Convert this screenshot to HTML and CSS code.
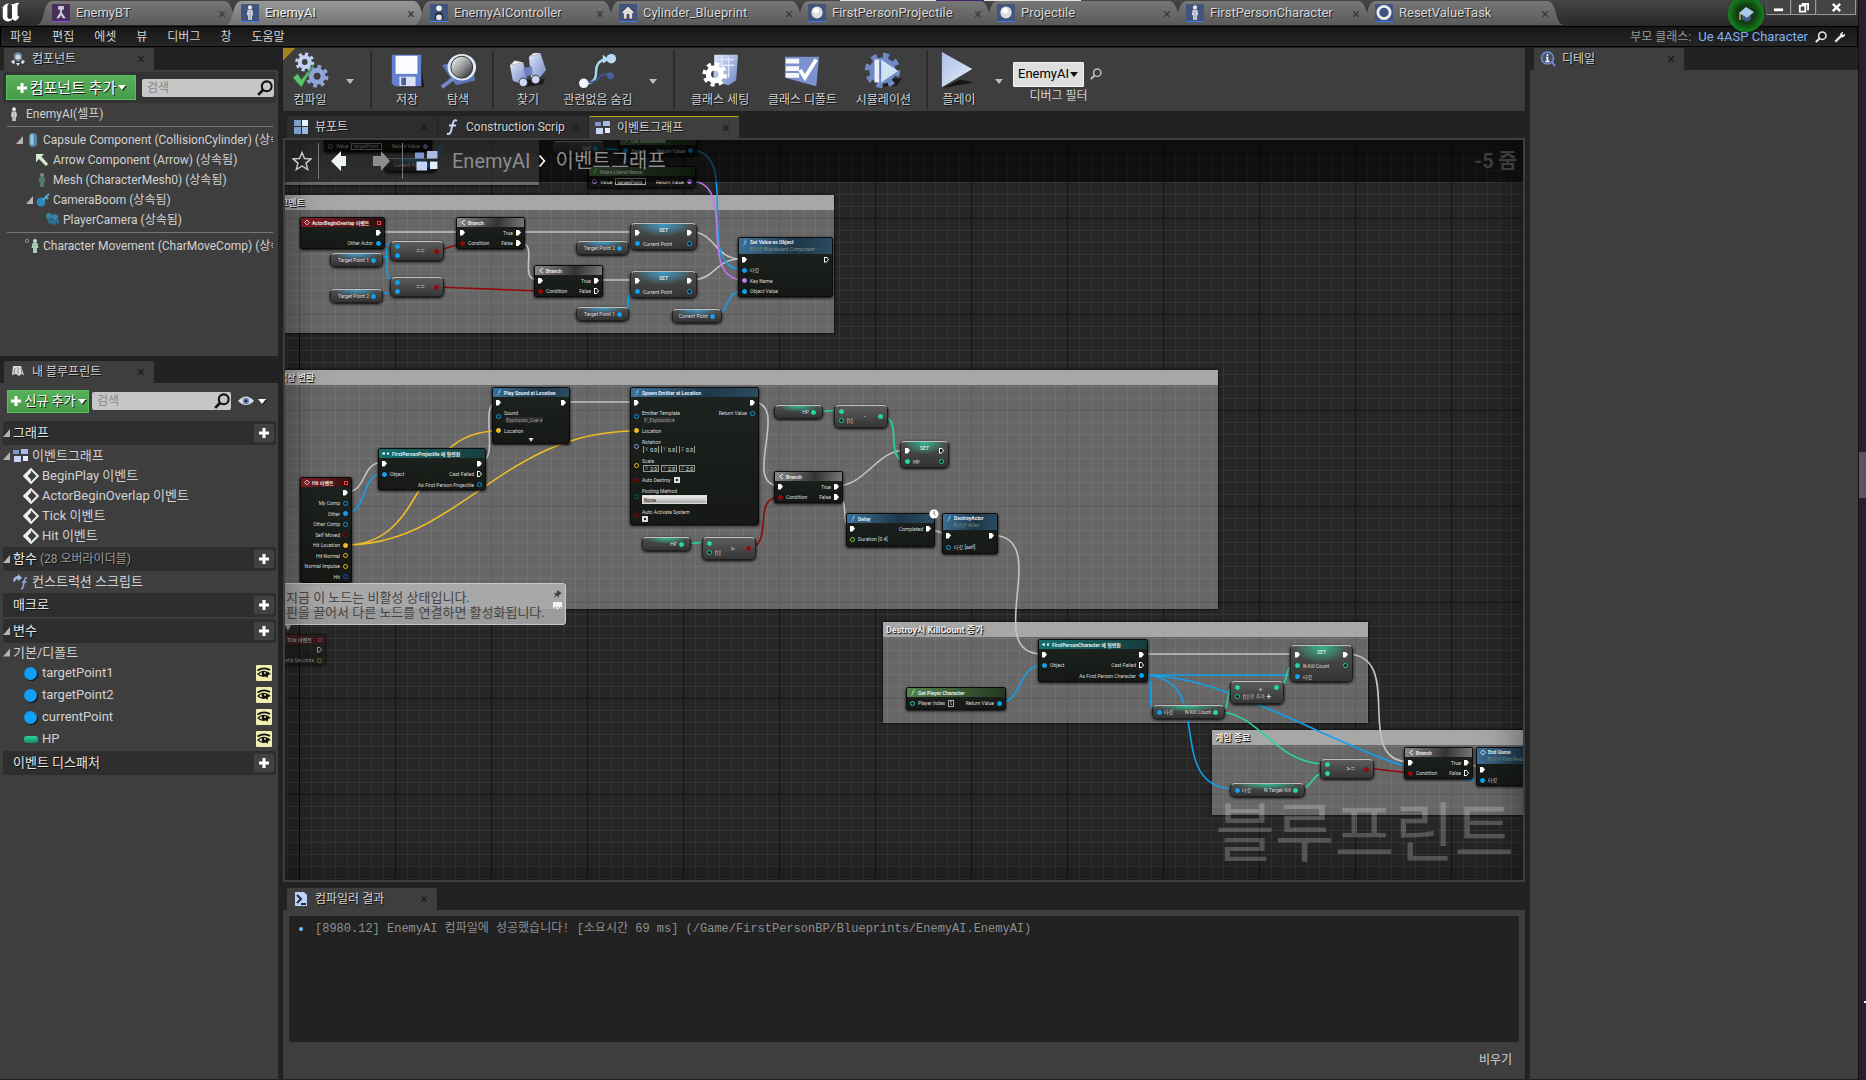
FILE: index.html
```html
<!DOCTYPE html>
<html lang="ko">
<head>
<meta charset="utf-8">
<title>EnemyAI</title>
<link rel="stylesheet" href="styles.css">
</head>
<body>
<svg class="defs" aria-hidden="true">
  <defs>
    <linearGradient id="steel" x1="0" y1="0" x2="1" y2="1"><stop offset="0" stop-color="#dfe7fb"/><stop offset="1" stop-color="#6f86c4"/></linearGradient>
    <linearGradient id="lens" x1="0" y1="0" x2="1" y2="1"><stop offset="0" stop-color="#fff"/><stop offset=".5" stop-color="#999"/><stop offset="1" stop-color="#222"/></linearGradient>
    <linearGradient id="play" x1="0" y1="0" x2="1" y2="1"><stop offset="0" stop-color="#aebde8"/><stop offset="1" stop-color="#e2f0f8"/></linearGradient>
    <symbol id="gear" viewBox="-12 -12 24 24"><circle r="6" fill="none" stroke="currentColor" stroke-width="5"/><circle r="9.5" fill="none" stroke="currentColor" stroke-width="4" stroke-dasharray="3.73 3.73"/></symbol>
    <symbol id="search" viewBox="0 0 14 14"><circle cx="8.5" cy="5.5" r="4.3" fill="none" stroke="currentColor" stroke-width="1.8"/><path d="M5.5 8.5 1 13" stroke="currentColor" stroke-width="2.4"/></symbol>
    <symbol id="person" viewBox="0 0 18 18"><circle cx="9" cy="3.6" r="2.2" fill="#e8e8e8"/><path d="M6.5 6.2h5l1 5.6h-1.4V17H7v-5.2H5.6z" fill="#cfd3d8"/><path d="M9 7v10" stroke="#777" stroke-width=".6"/></symbol>
    <symbol id="egg" viewBox="0 0 18 18"><ellipse cx="9" cy="9" rx="6" ry="6.4" fill="#ddd"/><ellipse cx="8" cy="7" rx="3" ry="3" fill="#fff"/></symbol>
    <symbol id="graph" viewBox="0 0 16 14"><path d="M0 1h6v4H0z" fill="#7f97cf"/><path d="M8 0h7v5H8z" fill="#aabbe8"/><path d="M1 7h7v6H1z" fill="#c6d2f3"/><path d="M10 7h5v5h-5z" fill="#e6ecff"/></symbol>
    <symbol id="event" viewBox="0 0 14 14"><path d="M7 1 13 7 7 13 1 7z" fill="none" stroke="#eee" stroke-width="1.8"/><path d="M7 1v12L1 7z" fill="#eee"/><path d="M4 7l3-3v6z" fill="#3e3e3e"/></symbol>
    <symbol id="branch" viewBox="0 0 6 6"><path d="M5 .5 1.5 3 5 5.5" fill="none" stroke="#eee" stroke-width="1"/></symbol>
    <symbol id="dia" viewBox="0 0 6 6"><path d="M3 .6 5.4 3 3 5.4 .6 3z" fill="none" stroke="#eee" stroke-width=".9"/></symbol>
    <symbol id="cast" viewBox="0 0 8 6"><path d="M0 3h3M5 3h2M2 1.6v2.8M6 1.6v2.8" stroke="#eee" stroke-width="1.2"/></symbol>
    <symbol id="fn" viewBox="0 0 6 8"><path d="M5.4 1C4 .4 3.6 1.4 3.2 3.4 2.8 5.8 2.2 7.4.8 6.9M2 3.4h2.6" fill="none" stroke="currentColor" stroke-width="1"/></symbol>
    <symbol id="eye" viewBox="0 0 16 16"><path d="M1.500 5.500Q8 1.500 14 5" stroke="#111" stroke-width="1.800" fill="none"/><path d="M1 9Q5 5.500 8 5.800 12 6 15 9q-2 0-3 1.500L11.500 13 10 11.500Q5 13 1 9z" fill="#111"/><path d="M3 9q1.500-1.500 3-1.800-.8 2 .3 3.300Q4.500 10.300 3 9z" fill="#f0eeb0"/><circle cx="9" cy="8" r=".9" fill="#f0eeb0"/></symbol>
    <symbol id="plus" viewBox="0 0 12 12"><path d="M4.500 1h3v3.500H11v3H7.500V11h-3V7.500H1v-3h3.500z" fill="#fff"/></symbol>
  </defs>
</svg>

<div class="app">
<div class="window">
  <header class="titlebar">
    <svg class="logo" viewBox="0 0 24 26"><path d="M2 8Q4 4 9 3.500 7 5 7 7v11q0 2 2 2.500 2 .2 3-1V6q0-1-2-1.500 5 .5 7-1.500 2 0 3 .5-2 1-2 3v10q0 1.500 2 .8-1 4-4.500 5.500l-3-2q-2 2.500-5 2.500-5-1-5.500-5V9q0-1-2-1z" fill="#fff"/></svg>
    <nav class="doc-tabs">
      <div class="doc-tab"><svg class="ticon violet" viewBox="0 0 18 18"><path d="M6 2h6v4H6zM8 6h2v3l4 6h-3l-2-3-2 3H4l4-6z" fill="#cfc6d8"/></svg><button>EnemyBT</button><button class="x" aria-label="닫기">×</button></div>
      <div class="doc-tab on"><svg class="ticon"><use href="#person"/></svg><button>EnemyAI</button><button class="x" aria-label="닫기">×</button></div>
      <div class="doc-tab"><svg class="ticon" viewBox="0 0 18 18"><circle cx="9" cy="4.500" r="3" fill="#eee"/><path d="M6 9h6l2 7H4z" fill="#222c44"/><circle cx="9" cy="14" r="3" fill="#e6e6e6"/></svg><button>EnemyAIController</button><button class="x" aria-label="닫기">×</button></div>
      <div class="doc-tab"><svg class="ticon" viewBox="0 0 18 18"><path d="M2 9 9 2l7 7-2 1v6h-4v-5H8v5H4v-6z" fill="#ddd" stroke="#444"/></svg><button>Cylinder_Blueprint</button><button class="x" aria-label="닫기">×</button></div>
      <div class="doc-tab"><svg class="ticon"><use href="#egg"/></svg><button>FirstPersonProjectile</button><button class="x" aria-label="닫기">×</button></div>
      <div class="doc-tab"><svg class="ticon"><use href="#egg"/></svg><button>Projectile</button><button class="x" aria-label="닫기">×</button></div>
      <div class="doc-tab"><svg class="ticon"><use href="#person"/></svg><button>FirstPersonCharacter</button><button class="x" aria-label="닫기">×</button></div>
      <div class="doc-tab"><svg class="ticon" viewBox="0 0 18 18"><circle cx="9" cy="9" r="6.500" fill="none" stroke="#eee" stroke-width="3"/></svg><button>ResetValueTask</button><button class="x" aria-label="닫기">×</button></div>
    </nav>
    <button class="tutorial" aria-label="튜토리얼"><svg viewBox="0 0 18 18"><path d="M9 2 17 7 10 13 2 8z" fill="#a9c9ee"/><path d="M5 10v4l5 3 4-3v-4l-4 3z" fill="#3e5a86"/><path d="M3 8v7" stroke="#d6b26a" stroke-width="1.400"/></svg></button>
    <div class="winbtns">
      <button aria-label="최소화"><svg viewBox="0 0 12 12"><path d="M1 7h10v3H1z" fill="#fff"/></svg></button>
      <button aria-label="이전 크기로"><svg viewBox="0 0 12 12"><path d="M4 2h7v7M2 4h6v6.500H2z" fill="none" stroke="#fff" stroke-width="2"/></svg></button>
      <button class="wide" aria-label="닫기"><svg viewBox="0 0 12 12"><path d="M2 2l8 8M10 2l-8 8" stroke="#fff" stroke-width="2.600"/></svg></button>
    </div>
  </header>

  <div class="menubar">
    <button>파일</button><button>편집</button><button>에셋</button><button>뷰</button><button>디버그</button><button>창</button><button>도움말</button>
    <div class="parent"><span>부모 클래스:</span><a href="#">Ue 4ASP Character</a><svg class="s12"><use href="#search"/></svg><svg class="s12" viewBox="0 0 14 14"><path d="M1.500 12.500 8 6" stroke="#eee" stroke-width="2.600"/><path d="M7 6q-.5-4 4-5L9.500 3.500l1.200 1.200L13 3q0 5-5 4.500z" fill="#eee"/></svg></div>
  </div>

  <main class="work">
    <aside class="left">
      <section class="dock components">
        <div class="ptab"><svg class="s16" viewBox="0 0 16 16"><path d="M8 1l4 2v5l-4 3-4-3V3z" fill="#7189a8"/><circle cx="8" cy="6" r="2.500" fill="#cfd6df"/><path d="M1 10l3-1 1 3-2 1zM15 10l-3-1-1 3 2 1zM6 12h4l-2 3z" fill="#e5e5e5"/></svg><span>컴포넌트</span><button class="x" aria-label="닫기">×</button></div>
        <div class="pane">
          <div class="bar">
            <button class="green big"><svg class="s12"><use href="#plus"/></svg>컴포넌트 추가<i class="dn"></i></button>
            <label class="find"><input type="text" placeholder="검색" aria-label="컴포넌트 검색"><svg class="s16"><use href="#search"/></svg></label>
          </div>
          <ul class="tree">
            <li class="self"><svg class="s16"><use href="#person"/></svg><span>EnemyAI(셀프)</span></li>
            <li class="rule"></li>
            <li class="d1"><i class="tri"></i><svg class="s16" viewBox="0 0 16 16"><rect x="4" y="1" width="8" height="14" rx="4" fill="#4f88ad"/><rect x="5.500" y="2" width="3" height="11" rx="1.500" fill="#9cc7de"/></svg><span>Capsule Component (CollisionCylinder) (상속됨)</span></li>
            <li class="d2"><svg class="s16" viewBox="0 0 16 16"><path d="M2 2h8L7.500 4.500 14 12l-2 2-7-7L2 10z" fill="#d7ecd3"/></svg><span>Arrow Component (Arrow) (상속됨)</span></li>
            <li class="d2"><svg class="s16" viewBox="0 0 16 16"><circle cx="8" cy="3" r="2" fill="#6f9080"/><path d="M5.500 5h5l1 5H10v5H6v-5H4.500z" fill="#58776a"/></svg><span>Mesh (CharacterMesh0) (상속됨)</span></li>
            <li class="d2 open"><i class="tri"></i><svg class="s16" viewBox="0 0 16 16"><circle cx="6" cy="10" r="4.500" fill="#2f86b8"/><path d="M8 8l6-6M10 4l3 3" stroke="#5aa7d0" stroke-width="1.800"/></svg><span>CameraBoom (상속됨)</span></li>
            <li class="d3"><svg class="s16" viewBox="0 0 16 16"><circle cx="5" cy="4" r="3" fill="#3583a8"/><circle cx="11" cy="5" r="3" fill="#3583a8"/><path d="M3 7l9 1v5l-8-2zM11 9l4-2v6z" fill="#2a6f93"/></svg><span>PlayerCamera (상속됨)</span></li>
            <li class="rule"></li>
            <li class="mv"><svg class="s16" viewBox="0 0 16 16"><path d="M3 1 5 3 3 5 1 3z" fill="none" stroke="#999"/><circle cx="11" cy="3" r="2" fill="#bfe0cf"/><path d="M8.500 5h5l1 5H13v5H9v-5H7.500z" fill="#a7c9b8"/></svg><span>Character Movement (CharMoveComp) (상속됨)</span></li>
          </ul>
        </div>
      </section>

      <section class="dock blueprint">
        <div class="ptab"><svg class="s16" viewBox="0 0 16 16"><path d="M3 2h8l3 9-3-1-2 2-3-2-4 1z" fill="#ddd"/><path d="M5 4l-1 6M8 3v7M11 4l1 6" stroke="#888"/></svg><span>내 블루프린트</span><button class="x" aria-label="닫기">×</button></div>
        <div class="pane">
          <div class="bar2">
            <button class="green"><svg class="s12"><use href="#plus"/></svg>신규 추가<i class="dn"></i></button>
            <label class="find"><input type="text" placeholder="검색" aria-label="블루프린트 검색"><svg class="s16"><use href="#search"/></svg></label>
            <button class="view" aria-label="보기 옵션"><svg viewBox="0 0 16 12"><path d="M0 6Q8-3 16 6 8 14 0 6z" fill="#d9dde3"/><circle cx="8" cy="6" r="3.200" fill="#6d88b5"/><circle cx="8" cy="6" r="1.400" fill="#223"/></svg><i class="dn"></i></button>
          </div>
          <div class="sec"><i class="tri"></i><h2>그래프</h2><button class="add" aria-label="그래프 추가"><svg class="s12"><use href="#plus"/></svg></button></div>
          <ul class="items">
            <li class="top"><i class="tri"></i><svg class="s16"><use href="#graph"/></svg><span>이벤트그래프</span></li>
            <li><svg class="s16"><use href="#event"/></svg><span>BeginPlay 이벤트</span></li>
            <li><svg class="s16"><use href="#event"/></svg><span>ActorBeginOverlap 이벤트</span></li>
            <li><svg class="s16"><use href="#event"/></svg><span>Tick 이벤트</span></li>
            <li><svg class="s16"><use href="#event"/></svg><span>Hit 이벤트</span></li>
          </ul>
          <div class="sec"><i class="tri"></i><h2>함수</h2><small>(28 오버라이더블)</small><button class="add" aria-label="함수 추가"><svg class="s12"><use href="#plus"/></svg></button></div>
          <ul class="items"><li class="script"><svg class="s16" viewBox="0 0 16 16"><path d="M0 7q1-5 5-5V0l4 4-4 3V5Q2 5 2 8z" fill="#a9bbe6"/><path d="M14 4q-2-1-2.500 2l-1.500 7q-.5 2-2 2M9 8h4.500" fill="none" stroke="#8ea6dd" stroke-width="1.600"/></svg><span>컨스트럭션 스크립트</span></li></ul>
          <div class="sec gap"><i class="tri none"></i><h2>매크로</h2><button class="add" aria-label="매크로 추가"><svg class="s12"><use href="#plus"/></svg></button></div>
          <div class="sec"><i class="tri"></i><h2>변수</h2><button class="add" aria-label="변수 추가"><svg class="s12"><use href="#plus"/></svg></button></div>
          <ul class="items vars">
            <li class="cat"><i class="tri"></i><span>기본/디폴트</span></li>
            <li><i class="ball"></i><span>targetPoint1</span><button class="vis" aria-label="공개"><svg><use href="#eye"/></svg></button></li>
            <li><i class="ball"></i><span>targetPoint2</span><button class="vis" aria-label="공개"><svg><use href="#eye"/></svg></button></li>
            <li><i class="ball"></i><span>currentPoint</span><button class="vis" aria-label="공개"><svg><use href="#eye"/></svg></button></li>
            <li><i class="cap"></i><span>HP</span><button class="vis" aria-label="공개"><svg><use href="#eye"/></svg></button></li>
          </ul>
          <div class="sec"><i class="tri none"></i><h2>이벤트 디스패처</h2><button class="add" aria-label="디스패처 추가"><svg class="s12"><use href="#plus"/></svg></button></div>
        </div>
      </section>
    </aside>

    <section class="center">
      <div class="toolbar">
        <div class="grp g1">
          <button class="tool"><svg viewBox="0 0 40 40"><g color="#c3cff0"><use href="#gear" x="4" y="0" width="21" height="21"/></g><g color="#8ea4da"><use href="#gear" x="15" y="13" width="25" height="25"/></g><path d="M2 27l5-4 4 6L25 12 11 37z" fill="#5fc46e" stroke="#2d7a3a" stroke-width=".8"/></svg>컴파일</button>
          <i class="dn soft"></i>
        </div>
        <div class="grp g2">
          <button class="tool"><svg viewBox="0 0 40 40"><path d="M34 6l4 31H12z" fill="#1c1c1c"/><path d="M4 3h31v33H7l-3-3z" fill="#6580cf"/><path d="M8 4h23v19H8z" fill="#fafcff"/><path d="M12 26h17v10H12z" fill="#dbe3f5"/><path d="M14 27h5v8h-5z" fill="#4c5f9c"/></svg>저장</button>
          <button class="tool"><svg viewBox="0 0 40 40"><path d="M3 14 34 5l4 25-20 5z" fill="#5d76b5"/><path d="M16 27 3 37" stroke="#7289c8" stroke-width="4"/><ellipse cx="24" cy="16" rx="15" ry="14" fill="#dfe9fa"/><circle cx="24" cy="16" r="11.500" fill="url(#lens)" stroke="#333"/></svg>탐색</button>
        </div>
        <div class="grp g3">
          <button class="tool"><svg viewBox="0 0 40 40"><path d="M12 30l26-2-2 6-20 3z" fill="#1b1b1b"/><path d="M1 14l14-3 4 16-6 7-9-4z" fill="url(#steel)"/><path d="M21 5l12-4 6 18-10 12-6-4z" fill="url(#steel)"/><path d="M15 17l9-2 1 9-8 2z" fill="#6c83bf"/><circle cx="15" cy="32" r="4.500" fill="#cdd8f2" stroke="#333"/><circle cx="28" cy="29" r="4.500" fill="#cdd8f2" stroke="#333"/><path d="M1 14l5-5 9 2zM21 5l5-4 7 0z" fill="#f2e9e4"/></svg>찾기</button>
          <button class="tool wide"><svg viewBox="0 0 40 40"><path d="M5 33q13 1 13-12T30 8" fill="none" stroke="#a5dcf0" stroke-width="2.600"/><path d="M25 3l7 5-7 4z" fill="#a5dcf0"/><path d="M8 32q10 0 13-5t12-3" fill="none" stroke="#3e578e" stroke-width="2"/><circle cx="5" cy="33" r="5" fill="#f2f8ff"/><circle cx="34" cy="7" r="5" fill="#bcd9f4"/><circle cx="33" cy="25" r="3.600" fill="#46609c"/></svg>관련없음 숨김</button>
          <i class="dn soft"></i>
        </div>
        <div class="grp g4">
          <button class="tool"><svg viewBox="0 0 40 40"><path d="M14 3h25l-2 27-8 5-16-4z" fill="url(#steel)"/><path d="M17 8h18M17 14h18M22 5v20M29 5v22" stroke="#dbe6fb" stroke-width="1.500"/><g color="#fff"><use href="#gear" x="1" y="10" width="27" height="27"/></g></svg>클래스 세팅</button>
          <button class="tool"><svg viewBox="0 0 40 40"><path d="M2 5h36l-3 31L2 27z" fill="#7e92cf"/><path d="M3 7h14v5H3zM3 15h14v5H3zM3 22h14v5H3z" fill="#f5f7fc"/><path d="M18 19l5 8L35 8" fill="none" stroke="#fff" stroke-width="4"/></svg>클래스 디폴트</button>
          <button class="tool"><svg viewBox="0 0 40 40"><path d="M22 28l18 0-6 8H20z" fill="#1c1c1c"/><g color="#6f88c6"><use href="#gear" x="0" y="0" width="39" height="39"/></g><circle cx="19" cy="19" r="9" fill="#5c74b0"/><path d="M11 8h5v24h-5z" fill="#e6edf8"/><path d="M18 8l18 12-18 12z" fill="#cfe3f4"/></svg>시뮬레이션</button>
        </div>
        <div class="grp g5">
          <button class="tool"><svg viewBox="0 0 40 40"><path d="M3 38l32-6-14-3z" fill="#161616"/><path d="M2 0l32 18L2 37z" fill="url(#play)"/></svg>플레이</button>
          <i class="dn soft"></i>
          <div class="debug"><div><span class="pick"><select aria-label="디버그 필터"><option>EnemyAI</option></select></span><svg class="s12"><use href="#search"/></svg></div><span>디버그 필터</span></div>
        </div>
      </div>

      <div class="ptabs">
        <div class="ptab dim"><svg class="s16" viewBox="0 0 16 16"><path d="M1 1h7v6H1zM1 8h7v7H1z" fill="#7ba0c8"/><path d="M9 1h6v6H9z" fill="#e8f4fc"/><path d="M9 8h6v7H9z" fill="#9dbbe0"/></svg><span>뷰포트</span><button class="x" aria-label="닫기">×</button></div>
        <div class="ptab dim"><svg class="s16" viewBox="0 0 16 16"><path d="M13 2q-3-2-4 2L7 12q-1 4-4 2.500M5 6.500h7" fill="none" stroke="#c5d3f7" stroke-width="2"/></svg><span>Construction Scrip</span><button class="x" aria-label="닫기">×</button></div>
        <div class="ptab cur"><svg class="s16"><use href="#graph"/></svg><span>이벤트그래프</span><button class="x" aria-label="닫기">×</button></div>
      </div>

      <div class="graph">
        <div class="comment c0"></div>
        <div class="comment c1"><h3>코멘트</h3></div>
        <div class="comment c2"><h3>색상 변환</h3></div>
        <div class="comment c3"><h3>Destroy시 KillCount 증가</h3></div>
        <div class="comment c4"><h3>게임 종료</h3></div>

        <svg class="wires" viewBox="285 140 1237 740" width="1237" height="740">
          <g class="w-exec">
            <path d="M378 232H458M520 232H634M598 280H634M564 402H636M1142 654H1292"/>
            <path d="M520 243C540 243 517 280 538 280M691 232C716 232 714 259 741 259M691 280C716 280 714 259 741 259"/>
            <path d="M346 492C368 492 360 462 384 462M479 462C502 462 477 402 498 402M752 402C792 402 740 486 780 486M836 486C866 486 876 450 906 450M836 497C852 497 838 528 852 528M928 528L948 535M991 535C1055 535 980 654 1042 654M1346 654C1408 654 1350 762 1410 762M1466 762L1482 769"/>
          </g>
          <g class="w-obj">
            <path d="M377 243L397 246M377 243C398 243 376 282 397 282M371 260L397 255M371 296L397 291M618 248L636 243M620 314C636 314 620 291 637 291M712 316C732 316 722 291 744 291"/>
            <path d="M690 150C745 150 690 270 744 270M592 148L624 150M440 145V156"/>
            <path d="M346 513C368 513 360 473 384 473M1000 702C1024 702 1016 665 1044 665M1142 675H1296M1142 675C1160 675 1142 712 1158 712M1142 675C1220 675 1160 789 1236 789M1142 675C1250 675 1370 780 1482 780"/>
          </g>
          <path class="w-name" d="M690 181C740 181 694 280 744 280"/>
          <path class="w-bool" d="M437 251L463 243M437 287L540 291M747 548C776 548 750 497 780 497M1366 768L1410 773"/>
          <path class="w-vec" d="M345 545C430 545 410 431 498 431M345 545C460 545 500 431 636 431"/>
          <path class="w-int" d="M682 544L708 542M814 412L840 410M880 416C906 416 882 461 907 461M1218 712C1234 712 1222 686 1236 686M1276 686C1292 686 1282 665 1296 665M1218 712C1260 712 1274 764 1326 764M1298 789C1314 789 1310 773 1326 773"/>
        </svg>

        <div class="node pure n-lit0"><header><svg><use href="#fn"/></svg>Make Literal Name</header><div class="row"></div><div class="row"><span><i class="pin name off"></i>Value<input value="targetPoint" aria-label="Value"></span><span>Return Value<i class="pin name"></i></span></div></div>
        <div class="pill obj n-cp0"><span>Current Point</span><i class="pin"></i></div>
        <div class="pill grn n-self"><span>Self</span><i class="pin obj"></i></div>
        <div class="node pure n-bb"><header><svg><use href="#fn"/></svg>Get Blackboard</header><div class="row"><span><i class="pin obj"></i>Target</span><span>Return Value<i class="pin obj"></i></span></div></div>
        <div class="node pure n-lit"><header><svg><use href="#fn"/></svg>Make Literal Name</header><div class="row"><span><i class="pin name off"></i>Value<input value="targetPoint" aria-label="Value"></span><span>Return Value<i class="pin name"></i></span></div></div>

        <div class="node ev n-abo"><header><svg><use href="#dia"/></svg>ActorBeginOverlap 이벤트<b></b></header><div class="row"><span></span><span><i class="ex"></i></span></div><div class="row"><span></span><span>Other Actor<i class="pin obj"></i></span></div></div>
        <div class="pill obj n-tp1"><span>Target Point 1</span><i class="pin"></i></div>
        <div class="pill obj n-tp2"><span>Target Point 2</span><i class="pin"></i></div>
        <div class="op n-eq1"><div><i class="pin obj"></i><i class="pin obj"></i></div><span>==</span><i class="pin bool"></i></div>
        <div class="op n-eq2"><div><i class="pin obj"></i><i class="pin obj"></i></div><span>==</span><i class="pin bool"></i></div>
        <div class="node br n-br1"><header><svg><use href="#branch"/></svg>Branch</header><div class="row"><span><i class="ex"></i></span><span>True<i class="ex"></i></span></div><div class="row"><span><i class="pin bool"></i>Condition</span><span>False<i class="ex"></i></span></div></div>
        <div class="node br n-br2"><header><svg><use href="#branch"/></svg>Branch</header><div class="row"><span><i class="ex"></i></span><span>True<i class="ex"></i></span></div><div class="row"><span><i class="pin bool"></i>Condition</span><span>False<i class="ex off"></i></span></div></div>
        <div class="pill obj n-tp3"><span>Target Point 2</span><i class="pin"></i></div>
        <div class="pill obj n-tp4"><span>Target Point 1</span><i class="pin"></i></div>
        <div class="set obj n-set1"><div class="row"><i class="ex"></i><em>SET</em><i class="ex"></i></div><div class="row"><span><i class="pin"></i>Current Point</span><i class="pin off"></i></div></div>
        <div class="set obj n-set2"><div class="row"><i class="ex"></i><em>SET</em><i class="ex"></i></div><div class="row"><span><i class="pin"></i>Current Point</span><i class="pin off"></i></div></div>
        <div class="pill obj n-cp"><span>Current Point</span><i class="pin"></i></div>
        <div class="node call n-svo"><header class="two"><div><svg><use href="#fn"/></svg>Set Value as Object</div><small>타깃은 Blackboard Component</small></header><div class="row"><span><i class="ex"></i></span><span><i class="ex off"></i></span></div><div class="row"><span><i class="pin obj"></i>타깃</span></div><div class="row"><span><i class="pin name"></i>Key Name</span></div><div class="row"><span><i class="pin obj"></i>Object Value</span></div></div>

        <div class="node ev n-hit"><header><svg><use href="#dia"/></svg>Hit 이벤트<b></b></header><div class="row"><span></span><span><i class="ex"></i></span></div><div class="row"><span></span><span>My Comp<i class="pin obj off"></i></span></div><div class="row"><span></span><span>Other<i class="pin obj"></i></span></div><div class="row"><span></span><span>Other Comp<i class="pin obj off"></i></span></div><div class="row"><span></span><span>Self Moved<i class="pin bool off"></i></span></div><div class="row"><span></span><span>Hit Location<i class="pin vec"></i></span></div><div class="row"><span></span><span>Hit Normal<i class="pin vec off"></i></span></div><div class="row"><span></span><span>Normal Impulse<i class="pin vec off"></i></span></div><div class="row"><span></span><span>Hit<i class="pin str off"></i></span></div></div>
        <div class="node cast n-cast1"><header><svg class="w"><use href="#cast"/></svg>FirstPersonProjectile 에 형변환</header><div class="row"><span><i class="ex"></i></span><span><i class="ex"></i></span></div><div class="row"><span><i class="pin obj"></i>Object</span><span>Cast Failed<i class="ex off"></i></span></div><div class="row"><span></span><span>As First Person Projectile<i class="pin obj off"></i></span></div></div>
        <div class="node call n-snd"><header><svg><use href="#fn"/></svg>Play Sound at Location</header><div class="row"><span><i class="ex"></i></span><span><i class="ex"></i></span></div><div class="row h17"><span><i class="pin obj off"></i><span class="col">Sound<button class="asset">Explosion_Cue ▾</button></span></span></div><div class="row"><span><i class="pin vec"></i>Location</span></div><div class="more">▼</div></div>
        <div class="node call n-spawn"><header><svg><use href="#fn"/></svg>Spawn Emitter at Location</header><div class="row"><span><i class="ex"></i></span><span><i class="ex"></i></span></div>
          <div class="row h17"><span><i class="pin obj off"></i><span class="col">Emitter Template<button class="asset">P_Explosion ▾</button></span></span><span class="up">Return Value<i class="pin obj off"></i></span></div>
          <div class="row"><span><i class="pin vec"></i>Location</span></div>
          <div class="row h20"><span><i class="pin rot off"></i><span class="col">Rotation<span class="xyz"><label>X<input value="0.0"></label><label>Y<input value="0.0"></label><label>Z<input value="0.0"></label></span></span></span></div>
          <div class="row h18"><span><i class="pin vec off"></i><span class="col">Scale<span class="xyz boxed"><label>X<input value="2.0"></label><label>Y<input value="2.0"></label><label>Z<input value="2.0"></label></span></span></span></div>
          <div class="row h12"><span><i class="pin bool off"></i><label>Auto Destroy<input type="checkbox" checked></label></span></div>
          <div class="row h20"><span><i class="pin enum off"></i><label class="col">Pooling Method<select><option>None</option></select></label></span></div>
          <div class="row h18"><span><i class="pin bool off"></i><label class="col">Auto Activate System<input type="checkbox" checked></label></span></div>
        </div>
        <div class="pill int n-hp1"><span>HP</span><i class="pin"></i></div>
        <div class="op int n-gt"><div><i class="pin"></i><u><i class="pin off"></i>[1]</u></div><span>&gt;</span><i class="pin bool"></i></div>
        <div class="pill int n-hp2"><span>HP</span><i class="pin"></i></div>
        <div class="op int n-sub"><div><i class="pin"></i><u><i class="pin off"></i>[1]</u></div><span>-</span><i class="pin"></i></div>
        <div class="set int n-sethp"><div class="row"><i class="ex"></i><em>SET</em><i class="ex off"></i></div><div class="row"><span><i class="pin"></i>HP</span><i class="pin off"></i></div></div>
        <div class="node br n-br3"><header><svg><use href="#branch"/></svg>Branch</header><div class="row"><span><i class="ex"></i></span><span>True<i class="ex"></i></span></div><div class="row"><span><i class="pin bool"></i>Condition</span><span>False<i class="ex"></i></span></div></div>
        <div class="node call n-delay"><header><svg><use href="#fn"/></svg>Delay</header><div class="row"><span><i class="ex"></i></span><span>Completed<i class="ex"></i></span></div><div class="row"><span><i class="pin flt off"></i>Duration [0.4]</span></div></div>
        <svg class="clock" viewBox="0 0 10 10"><circle cx="5" cy="5" r="4.600" fill="#fff"/><path d="M5 2v3l1.500 1" stroke="#777" fill="none"/></svg>
        <div class="node call n-des"><header class="two"><div><svg><use href="#fn"/></svg>DestroyActor</div><small>타깃은 Actor</small></header><div class="row"><span><i class="ex"></i></span><span><i class="ex"></i></span></div><div class="row h12"><span><i class="pin obj off"></i>타깃 [self]</span></div></div>

        <div class="node cast n-cast2"><header><svg class="w"><use href="#cast"/></svg>FirstPersonCharacter 에 형변환</header><div class="row"><span><i class="ex"></i></span><span><i class="ex"></i></span></div><div class="row"><span><i class="pin obj"></i>Object</span><span>Cast Failed<i class="ex off"></i></span></div><div class="row"><span></span><span>As First Person Character<i class="pin obj"></i></span></div></div>
        <div class="node pure n-gpc"><header><svg><use href="#fn"/></svg>Get Player Character</header><div class="row h12"><span><i class="pin int off"></i>Player Index<input class="n" value="0" aria-label="Player Index"></span><span>Return Value<i class="pin obj"></i></span></div></div>
        <div class="set int n-setk"><div class="row"><i class="ex"></i><em>SET</em><i class="ex"></i></div><div class="row"><span><i class="pin"></i>N Kill Count</span><i class="pin off"></i></div><div class="row"><span><i class="pin obj"></i>타깃</span></div></div>
        <div class="op int n-add"><div><i class="pin"></i><u><i class="pin off"></i>[1]</u></div><span>+<small>핀 추가 ✚</small></span><i class="pin hi"></i></div>
        <div class="pill int two-way n-kc"><i class="pin obj"></i><small>타깃</small><span>N Kill Count</span><i class="pin"></i></div>
        <div class="pill int two-way n-tk"><i class="pin obj"></i><small>타깃</small><span>N Target Kill</span><i class="pin"></i></div>
        <div class="op int n-ge"><div><i class="pin"></i><i class="pin"></i></div><span>&gt;=</span><i class="pin bool"></i></div>
        <div class="node br n-br4"><header><svg><use href="#branch"/></svg>Branch</header><div class="row"><span><i class="ex"></i></span><span>True<i class="ex"></i></span></div><div class="row"><span><i class="pin bool"></i>Condition</span><span>False<i class="ex off"></i></span></div></div>
        <div class="node call n-end"><header class="two"><div><svg><use href="#dia"/></svg>End Game</div><small>타깃은 First Person</small></header><div class="row"><span><i class="ex"></i></span></div><div class="row"><span><i class="pin obj"></i>타깃</span></div></div>
        <div class="node ev n-tick"><header>Tick 이벤트<b></b></header><div class="row"><span></span><span><i class="ex off"></i></span></div><div class="row"><span></span><span>Delta Seconds<i class="pin flt off"></i></span></div></div>

        <div class="bubble"><p>지금 이 노드는 비활성 상태입니다.<br>핀을 끌어서 다른 노드를 연결하면 활성화됩니다.</p><div><svg viewBox="0 0 10 10"><path d="M5 0l5 4-2 .5L6 7l.5 2L4 6.500 0 10l3-4.500L1 3.500l3-.2z" fill="#444"/></svg><svg viewBox="0 0 10 10"><path d="M0 0h10v7H6L5 9 4 7H0z" fill="#eef3f8"/><path d="M2 6h1M5 6h1M8 6h1" stroke="#555"/></svg></div></div>

        <div class="shade"></div>
        <div class="crumbs">
          <button aria-label="즐겨찾기"><svg viewBox="0 0 20 20"><path d="M10 1.500l2.500 6 6.500.4-5 4.200 1.700 6.400L10 15l-5.700 3.500L6 12.100 1 7.900l6.500-.4z" fill="none" stroke="#ccc" stroke-width="1.400"/></svg></button>
          <i class="bar-v"></i>
          <button aria-label="뒤로"><svg viewBox="0 0 20 20"><path d="M2 10 12 0v5h5v10h-5v5z" fill="#eef4f6"/></svg></button>
          <button aria-label="앞으로" class="fwd"><svg viewBox="0 0 20 20"><path d="M18 10 9 0v5H1v10h8v5z" fill="#8d8d8d"/></svg></button>
          <i class="bar-v wide"></i>
          <svg class="cg"><use href="#graph"/></svg>
          <a href="#">EnemyAI</a>
          <svg class="chev" viewBox="0 0 10 16"><path d="M2 1l6 7-6 7" fill="none" stroke="#fff" stroke-width="2"/></svg>
          <span>이벤트그래프</span>
          <strong>-5 줌</strong>
        </div>
        <div class="mark">블루프린트</div>
      </div>

      <div class="ptabs results"><div class="ptab"><svg class="s16" viewBox="0 0 16 16"><path d="M2 1h9l3 3v11H2z" fill="#bcd2f2"/><path d="M4 4l4 4-4 4M8 13h5" fill="none" stroke="#1d2a4c" stroke-width="2"/></svg><span>컴파일러 결과</span><button class="x" aria-label="닫기">×</button></div></div>
      <div class="log">
        <ul><li>[8980.12] EnemyAI 컴파일에 성공했습니다! [소요시간 69 ms] (/Game/FirstPersonBP/Blueprints/EnemyAI.EnemyAI)</li></ul>
        <button>비우기</button>
      </div>
    </section>

    <aside class="right">
      <div class="ptab"><svg class="s16" viewBox="0 0 16 16"><circle cx="7.500" cy="7" r="6" fill="#48536b" stroke="#6d8fd6" stroke-width="1.500"/><path d="M12 11l3 4" stroke="#6d8fd6" stroke-width="2"/><path d="M7.500 3v2M6 6.500h1.500V10M5.500 10.500h4" stroke="#fff" stroke-width="1.500" fill="none"/></svg><span>디테일</span><button class="x" aria-label="닫기">×</button></div>
      <div class="pane"></div>
    </aside>
  </main>
</div>
<div class="edge"></div>
</div>
</body>
</html>
```
FILE: styles.css
```css
* { box-sizing: border-box; }
body {
  margin: 0;
  background: #222;
  color: #d2d2d2;
  font: 12px/16px Roboto, "Noto Sans CJK KR", sans-serif;
}
button { font: inherit; color: inherit; background: none; border: 0; padding: 0; margin: 0; text-shadow: inherit; }
input, select { font: inherit; }
ul, p, h2, h3 { margin: 0; padding: 0; list-style: none; font-weight: normal; }
a { color: inherit; text-decoration: none; }
svg { flex: none; display: block; }
.defs { position: absolute; width: 0; height: 0; }
.s12 { width: 12px; height: 12px; }
.s16 { width: 16px; height: 16px; }
.x { color: #1c1c1c; font-size: 14px; line-height: 16px; width: 10px; text-shadow: none; }
.dn { width: 0; height: 0; border: 4px solid transparent; border-top: 5px solid #fff; border-bottom: 0; filter: drop-shadow(1px 1px 0 #1a1a1a); }
.dn.soft { border-top-color: #bbb; filter: none; }
.tri { flex: none; width: 7px; height: 8px; background: #b4b4b4; clip-path: polygon(100% 0, 100% 100%, 0 100%); }
.tri.none { visibility: hidden; }

.app { display: flex; height: 100vh; min-height: 1000px; overflow: hidden; }
.window { flex: 1; min-width: 0; display: flex; flex-direction: column; padding-bottom: 1px; }
.edge {
  width: 8px; border-left: 1px solid #111;
  background: linear-gradient(#5a5660, #5a5660) 0 452px / 8px 46px no-repeat, linear-gradient(#fff, #fff) 5px 1001px / 3px 2px no-repeat, #24202d;
}

/* title bar */
.titlebar {
  display: flex; height: 26px; flex: none; position: relative; padding-right: 2px;
  background:
    linear-gradient(90deg, #e4e4e4 96px, #45266e 96px 144px, #e4e4e4 144px) 840px 0 / 241px 1px no-repeat,
    linear-gradient(#454545, #282828);
}
.logo { width: 24px; height: 24px; margin-right: 12px; }
.doc-tabs { display: flex; flex: 1; text-shadow: 1px 1px 0 #222; font-size: 13px; }
.doc-tab {
  width: 205px; height: 24px; margin: 1px -16px 0 0; padding: 0 12px 0 16px; flex: none;
  display: flex; align-items: center; gap: 6px; color: #d6d6d6;
  background: linear-gradient(#777, #5a5a5a);
  clip-path: path("M0 24C5 24 6 18 8 12 10 4 12 0 17 0H188C193 0 195 5 197 12 199 20 201 24 205 24Z");
}
.doc-tab.on { background: linear-gradient(#989898, #757575); position: relative; color: #eee; }
.doc-tab .x { margin: 2px 2px 0 auto; color: #3a3a3a; }
.ticon { width: 18px; height: 18px; background: #40547e; border-bottom: 1px solid #3b7cf0; }
.ticon.violet { background: #45305c; border-color: #9a4be0; }
.tutorial { width: 36px; height: 36px; margin: -4px 2px 0 0; border-radius: 50%; background: radial-gradient(#143a14 35%, #0fae1c 90%); padding: 9px; z-index: 2; }
.tutorial svg { width: 18px; height: 18px; }
.winbtns { display: flex; }
.winbtns button { width: 25px; height: 15px; border: 1px solid #999; border-top: 0; border-left-color: #555; background: #444; display: flex; justify-content: center; align-items: center; }
.winbtns .wide { width: 40px; }
.winbtns svg { width: 11px; height: 11px; }

.menubar {
  display: flex; height: 21px; flex: none; align-items: center; margin-bottom: 1px;
  background: linear-gradient(#161616, #262626); border: 1px solid #000;
}
.menubar button { margin: 0 11px 0 9px; }
.parent { margin-left: auto; display: flex; align-items: center; gap: 7px; padding-right: 11px; color: #999; }
.parent a { color: #7fb2f5; font-size: 13px; }
.parent svg { color: #eee; }

/* work area */
.work { flex: 1; min-height: 0; display: grid; grid-template-columns: 278px minmax(0, 1fr) 328px; gap: 5px; }
.ptab {
  display: flex; align-items: center; gap: 6px; width: 150px; height: 22px; padding: 0 8px 0 6px; flex: none;
  background: #3e3e3e; border-radius: 2px 2px 0 0; text-shadow: 1px 1px 0 #111; white-space: nowrap;
}
.ptab .x { margin-left: auto; }
.ptab span { font-size: 12px; }
.left { display: flex; flex-direction: column; gap: 5px; min-width: 0; }
.dock { display: flex; flex-direction: column; }
.dock .ptab, .right .ptab { margin-left: 4px; }
.pane { background: #3e3e3e; flex: 1; }
.components { height: 308px; flex: none; }
.blueprint { flex: 1; }
.bar { display: flex; gap: 6px; align-items: center; height: 31px; margin: 2px 2px 0 3px; padding: 0 2px 0 3px; background: #333; }
.bar2 { display: flex; gap: 3px; align-items: center; height: 38px; padding: 0 8px 2px 7px; }
.green {
  display: flex; align-items: center; justify-content: center; gap: 2px; height: 23px; width: 82px; flex: none;
  background: linear-gradient(#58b05a, #479b49); border: 1px solid #5bbf5e; color: #fff; text-shadow: 1px 1px 0 #222; font-size: 13px;
}
.green.big { width: 130px; height: 25px; font-size: 15px; }
.find { display: flex; align-items: center; flex: 1; min-width: 0; height: 18px; background: #c6c6c6; border-radius: 2px; color: #111; padding-right: 1px; }
.find input { flex: 1; min-width: 0; border: 0; background: none; padding: 0 5px; font-size: 12px; }
.find input::placeholder { color: #888; }
.view { display: flex; align-items: center; gap: 4px; width: 36px; padding-left: 4px; }
.view svg { width: 16px; height: 12px; }
.tree { padding: 0 5px 0 7px; font-size: 12px; }
.tree li { display: flex; align-items: center; gap: 3px; height: 20px; white-space: nowrap; overflow: hidden; }
.tree .self { height: 21px; gap: 4px; margin-left: -1px; }
.tree .rule { height: 1px; background: #777; margin: 2px 0 3px; }
.tree .d1 { padding-left: 9px; gap: 2px; }
.tree .d2 { padding-left: 27px; }
.tree .open { padding-left: 19px; gap: 2px; }
.tree .d3 { padding-left: 37px; }
.tree .mv { padding-left: 17px; }

.sec { display: flex; align-items: center; height: 24px; margin: 0 2px 0 3px; padding-right: 2px; background: #2e2e2e; border-radius: 2px; gap: 3px; text-shadow: 1px 1px 0 #111; }
.sec.gap { margin-bottom: 2px; }
.sec h2 { font-size: 13px; color: #e2e2e2; }
.sec small { font-size: 12px; color: #999; }
.add { margin-left: auto; width: 20px; height: 18px; background: #424242; border-radius: 2px; display: flex; align-items: center; justify-content: center; }
.items { font-size: 13px; padding: 1px 3px 1px 3px; }
.items li { display: flex; align-items: center; height: 20px; gap: 3px; padding-left: 20px; }
.items .top { padding-left: 0; }
.items .script { padding-left: 10px; }
.vars { padding: 0 6px 1px 3px; }
.vars li { height: 22px; }
.vars .cat { height: 19px; padding-left: 0; }
.ball { width: 13px; height: 13px; margin: 0 2px 0 1px; border-radius: 50%; background: radial-gradient(#10a0f8 55%, #0a6fb4); box-shadow: 1px 1px 0 #111; }
.cap { width: 14px; height: 7px; margin: 0 1px; border-radius: 3px; background: linear-gradient(#2ed39d, #0e8d63); }
.vis { margin-left: auto; width: 16px; height: 16px; background: #f0eeb0; border-radius: 1px; }
.vis svg { width: 16px; height: 16px; }

/* toolbar */
.center { display: flex; flex-direction: column; min-width: 0; }
.toolbar { height: 63px; flex: none; display: flex; align-items: center; background: linear-gradient(135deg, #a3831c 9px, transparent 9px), #3e3e3e; text-shadow: 1px 1px 0 #111; }
.grp { display: flex; align-items: center; justify-content: space-between; height: 59px; border-right: 2px solid #2c2c2c; }
.grp > .dn { margin-top: 4px; }
.tool { display: flex; flex-direction: column; align-items: center; gap: 2px; line-height: 17px; white-space: nowrap; padding-top: 2px; }
.tool svg { width: 38px; height: 38px; }
.g1 { width: 89px; padding: 0 16px 0 8px; }
.g2 { width: 122px; padding: 0 15px 0 16px; }
.g3 { width: 181px; padding: 0 16px 0 15px; }
.g4 { width: 253px; padding: 0 15px 0 16px; }
.g5 { border: 0; gap: 13px; padding-left: 12px; }
.g5 .dn { margin-left: 4px; }
.debug { display: flex; flex-direction: column; align-items: center; text-shadow: none; margin: 6px 0 0 -3px; }
.debug div { display: flex; align-items: center; gap: 6px; color: #bbb; margin-bottom: 1px; }
.debug > span { margin-right: -2px; }
.pick { position: relative; display: block; }
.pick::after { content: ""; position: absolute; right: 6px; top: 10px; border: 4px solid transparent; border-top: 5px solid #111; border-bottom: 0; pointer-events: none; }
.pick select { display: block; width: 71px; height: 25px; border: 1px solid #f4f4f4; border-radius: 1px; appearance: none; font-size: 13px; padding: 0 4px; color: #000; background: #dedede; }
.ptabs { display: flex; gap: 1px; padding-left: 4px; margin-top: 5px; flex: none; }
.ptabs.results { margin-top: 6px; }
.ptab.dim { background: #2d2d2d; }
.ptab.cur { border-top: 1px solid #c9a91b; }

/* graph canvas */
.graph {
  flex: 1; min-height: 0; position: relative; overflow: hidden; border: 2px solid #3e3e3e;
  background:
    linear-gradient(#080808, #080808) 14px 0 / 1px 100% no-repeat,
    linear-gradient(90deg, #151515 1px, transparent 1px) 14px 0 / 96px 96px,
    linear-gradient(#151515 1px, transparent 1px) 0 78px / 96px 96px,
    linear-gradient(90deg, #343434 1px, transparent 1px) 2px 0 / 12px 12px,
    linear-gradient(#343434 1px, transparent 1px) 0 6px / 12px 12px,
    #262626;
  font: 5px/6px Roboto, "Noto Sans CJK KR", sans-serif;
  color: #ddd;
}
.shade { position: absolute; inset: 0; box-shadow: inset 0 0 40px rgba(0, 0, 0, .5); pointer-events: none; }
.comment { position: absolute; background: rgba(255, 255, 255, .3); box-shadow: 0 0 3px #000; }
.comment h3 { height: 15px; padding: 0 3px; font: bold 9px/16px Roboto, "Noto Sans CJK KR", sans-serif; color: #eee; text-shadow: 1px 1px 1px #000; background: #a7a7a7; }
.c0 { left: -14px; top: -60px; width: 268px; height: 105px; }
.c1 { left: -8px; top: 55px; width: 557px; height: 138px; }
.c2 { left: -9px; top: 230px; width: 942px; height: 239px; }
.c3 { left: 598px; top: 482px; width: 485px; height: 101px; }
.c4 { left: 927px; top: 590px; width: 330px; height: 85px; }
.wires { position: absolute; left: 0; top: 0; fill: none; stroke-width: 1.6; }
.w-exec { stroke: #c4c4c4; }
.w-obj { stroke: #12a0ea; }
.w-name { stroke: #c078ee; }
.w-bool { stroke: #930808; }
.w-vec { stroke: #f0bd26; }
.w-int { stroke: #25d9a0; }

.node, .pill, .op, .set { position: absolute; white-space: nowrap; box-shadow: 0 1px 3px #000; }
.node { border-radius: 2px; background: linear-gradient(rgba(25, 31, 28, .95), rgba(17, 20, 16, .95)); border: 1px solid #0c0c0c; overflow: hidden; }
.node header { height: 9px; display: flex; align-items: center; gap: 2px; padding: 0 3px; font-weight: bold; color: #e8e8e8; }
.node header svg { width: 6px; height: 7px; }
.node header svg.w { width: 8px; }
.node header b { margin-left: auto; width: 4px; height: 4px; border: 1px solid #ff3b3b; background: #300; }
.node header.two { display: block; height: 16px; padding: 1px 3px; line-height: 7px; }
.node header.two div { display: flex; gap: 2px; }
.node header.two small { display: block; margin-left: 7px; font: italic 5px/7px Roboto, "Noto Sans CJK KR", sans-serif; color: #7f9a8c; }
.ev header { background: linear-gradient(90deg, #8e1c22, #4a1518 70%, #251011); }
.br header { background: linear-gradient(100deg, #8a8a8a, #333 60%, #777); }
.call header { background: linear-gradient(100deg, #3d7096, #1f3648 60%, #2b4c63); color: #e3eef6; }
.call header svg { color: #6fc3ff; }
.pure header { background: linear-gradient(100deg, #55834d, #24361f); }
.pure header svg { color: #9be88f; }
.cast header { background: linear-gradient(100deg, #137070, #173c3c); }
.row { display: flex; justify-content: space-between; align-items: center; height: 10px; padding: 0 3px; }
.row:nth-child(even) { height: 11px; }
.row > span { display: flex; align-items: center; gap: 3px; }
.row .up { align-self: flex-start; padding-top: 2px; }
.row.h12 { height: 12px; }
.row.h17 { height: 17px; }
.row.h18 { height: 18px; }
.row.h20 { height: 20px; }
.col { display: flex; flex-direction: column; align-items: flex-start; gap: 1px; }
.row input { width: 31px; height: 7px; border: 1px solid #aaa; background: none; color: #ccc; padding: 0 1px; font-size: 5px; }
.row input.n { width: 6px; }
.xyz { display: flex; gap: 2px; margin-left: 1px; }
.xyz label { display: flex; width: 16px; border: solid #999; border-width: 0 1px; color: #888; line-height: 7px; height: 7px; padding-left: 1px; }
.xyz.boxed label { border-width: 1px; line-height: 5px; }
.row .xyz label { gap: 2px; }
.row .xyz input { width: 9px; height: 100%; padding: 0; border: 0; color: #eee; }
.row label { display: flex; gap: 3px; }
.row label.col { gap: 1px; }
.row input[type="checkbox"] { appearance: none; width: 6px; height: 6px; margin: 0; border: 1px solid #ddd; background: radial-gradient(#222 30%, #ddd 40%); }
.row select { appearance: none; width: 65px; height: 9px; font-size: 5px; line-height: 6px; border: 1px solid #ddd; background: linear-gradient(#eee, #aaa); color: #222; padding: 0 1px; }
.asset { background: #2c2c2c; color: #999; margin-left: 2px; line-height: 6px; }
.more { text-align: center; line-height: 6px; }

.pin { --c: #0fa2f0; flex: none; display: block; width: 5px; height: 5px; border-radius: 50%; border: 1px solid var(--c); background: var(--c); }
.int .pin, .pin.int { --c: #20dba0; }
.pin.obj, .int .pin.obj { --c: #0fa2f0; }
.pin.bool, .int .pin.bool { --c: #960707; }
.pin.vec { --c: #f5bd22; }
.pin.name { --c: #bd7bf2; }
.pin.rot { --c: #8d9fe0; }
.pin.enum { --c: #0c6b5a; }
.pin.str { --c: #1459c0; }
.pin.flt { --c: #7fd63a; }
.pin.off { background: #111; }
.ex { flex: none; display: block; width: 5px; height: 6px; background: #fff; clip-path: polygon(0 0, 50% 0, 100% 50%, 50% 100%, 0 100%); }
.ex.off::after { content: ""; display: block; width: 3px; height: 4px; margin: 1px; background: #161a17; clip-path: polygon(0 0, 50% 0, 100% 50%, 50% 100%, 0 100%); }
.ex.off { display: flow-root; }

.pill, .set, .op { background: linear-gradient(#5c5c5c, #353535); border: 1px solid #1e1e1e; border-top-color: #c0c0c0; border-radius: 5px; --g: #3d9cc8; }
.pill, .set { background: radial-gradient(ellipse 45% 50% at 50% 0, var(--g), transparent), linear-gradient(#505050, #333); }
.pill.int, .set.int { --g: #2fb98e; }
.pill.grn { --g: #48683f; }
.pill { display: flex; align-items: center; justify-content: flex-end; gap: 2px; height: 14px; width: 53px; padding: 0 6px 0 4px; }
.two-way span { margin-left: auto; }
.two-way small { font-size: 5px; }
.set { padding-top: 3px; height: 27px; }
.set .row { height: 11px; padding: 0 4px; }
.set em { font: bold 5px/6px Roboto, sans-serif; align-self: flex-start; }
.op { display: flex; align-items: center; justify-content: space-between; width: 54px; height: 20px; padding: 0 4px; }
.op div { display: flex; flex-direction: column; gap: 4px; width: 12px; }
.op u { display: flex; gap: 3px; text-decoration: none; }
.op > span { font-size: 8px; color: #ccc; text-align: center; }
.op.int { height: 23px; }
.op small { display: block; font-size: 5px; }
.op .hi { align-self: flex-start; margin-top: 3px; }

.n-lit0 { left: 39px; top: -20px; width: 108px; height: 32px; }
.n-cp0 { left: 99px; top: 18px; }
.n-self { left: 267px; top: 1px; }
.n-bb { left: 334px; top: -5px; width: 78px; height: 21px; }
.n-lit { left: 303px; top: 26px; width: 108px; height: 22px; }
.n-abo { left: 15px; top: 77px; width: 85px; height: 32px; }
.n-tp1 { left: 45px; top: 113px; }
.n-tp2 { left: 45px; top: 149px; }
.n-eq1 { left: 105px; top: 101px; }
.n-eq2 { left: 105px; top: 137px; }
.n-br1 { left: 171px; top: 77px; width: 69px; height: 32px; }
.n-br2 { left: 249px; top: 125px; width: 69px; height: 32px; }
.n-tp3 { left: 291px; top: 101px; }
.n-tp4 { left: 291px; top: 167px; }
.n-set1 { left: 345px; top: 83px; width: 67px; }
.n-set2 { left: 345px; top: 131px; width: 67px; }
.n-cp { left: 387px; top: 169px; width: 50px; }
.n-svo { left: 453px; top: 97px; width: 95px; height: 60px; }
.n-hit { left: 15px; top: 337px; width: 52px; height: 106px; }
.n-cast1 { left: 93px; top: 308px; width: 108px; height: 42px; }
.n-snd { left: 207px; top: 247px; width: 78px; height: 57px; }
.n-spawn { left: 345px; top: 247px; width: 129px; height: 138px; }
.n-hp1 { left: 357px; top: 397px; width: 49px; }
.n-gt { left: 417px; top: 397px; }
.n-hp2 { left: 489px; top: 265px; width: 49px; }
.n-sub { left: 549px; top: 265px; }
.n-sethp { left: 615px; top: 301px; width: 49px; }
.n-br3 { left: 489px; top: 331px; width: 69px; height: 32px; }
.n-delay { left: 561px; top: 373px; width: 89px; height: 34px; }
.clock { position: absolute; left: 644px; top: 369px; width: 10px; height: 10px; }
.n-des { left: 657px; top: 373px; width: 56px; height: 41px; }
.n-cast2 { left: 753px; top: 499px; width: 110px; height: 43px; }
.n-gpc { left: 621px; top: 547px; width: 100px; height: 23px; }
.n-setk { left: 1005px; top: 505px; width: 63px; height: 37px; }
.n-add { left: 945px; top: 541px; }
.n-kc { left: 867px; top: 565px; width: 73px; }
.n-tk { left: 945px; top: 643px; width: 75px; }
.op.n-ge { left: 1035px; top: 619px; height: 20px; }
.n-br4 { left: 1119px; top: 607px; width: 69px; height: 32px; }
.n-end { left: 1191px; top: 607px; width: 80px; height: 39px; }
.n-tick { left: -25px; top: 494px; width: 66px; height: 31px; opacity: .5; }
.n-tick header { padding-left: 26px; }

.bubble {
  position: absolute; left: -6px; top: 443px; width: 287px; height: 42px; padding: 6px 3px 0 6px; display: flex; justify-content: space-between;
  background: rgba(185, 185, 185, .8); border: 1px solid #c8c8c8; border-radius: 3px;
  font-size: 13px; line-height: 15px; color: #444; white-space: nowrap;
}
.bubble::after { content: ""; position: absolute; left: 5px; top: 41px; border: 3px solid transparent; border-top: 6px solid #999; border-bottom: 0; }
.bubble div { display: flex; flex-direction: column; gap: 3px; }
.bubble svg { width: 9px; height: 9px; }

.crumbs {
  position: absolute; left: 0; right: 0; top: 0; height: 42px; padding: 0 6px 0 7px; display: flex; align-items: center;
  background: rgba(0, 0, 0, .55); color: #8c8c8c; font-size: 20px; line-height: 24px;
}
.crumbs button svg { width: 20px; height: 20px; }
.bar-v { width: 1px; height: 36px; background: #777; margin: 0 10px 0 6px; }
.bar-v.wide { margin: 0 12px 0 10px; }
.crumbs .fwd { margin-left: 23px; }
.cg { width: 24px; height: 21px; margin-right: 13px; }
.chev { width: 8px; height: 16px; margin: 0 10px 0 7px; }
.crumbs strong { margin-left: auto; color: #3c3c3c; }
.mark { position: absolute; right: 9px; bottom: 0; font-size: 65px; line-height: 92px; color: rgba(255, 255, 255, .22); }

/* compiler results */
.log { height: 169px; flex: none; background: #3e3e3e; padding: 6px 6px 0; display: flex; flex-direction: column; }
.log ul { height: 126px; background: #222; border-radius: 2px; padding: 5px 10px; color: #8f8f8f; font: 12px/16px "Liberation Mono", "Noto Sans CJK KR", monospace; }
.log li { display: flex; gap: 12px; }
.log li::before { content: ""; width: 4px; height: 4px; margin: 6px 0; border-radius: 50%; background: #6fc0ff; flex: none; }
.log button { align-self: flex-end; margin: 10px 7px 0 0; }
.right { display: flex; flex-direction: column; }
```
